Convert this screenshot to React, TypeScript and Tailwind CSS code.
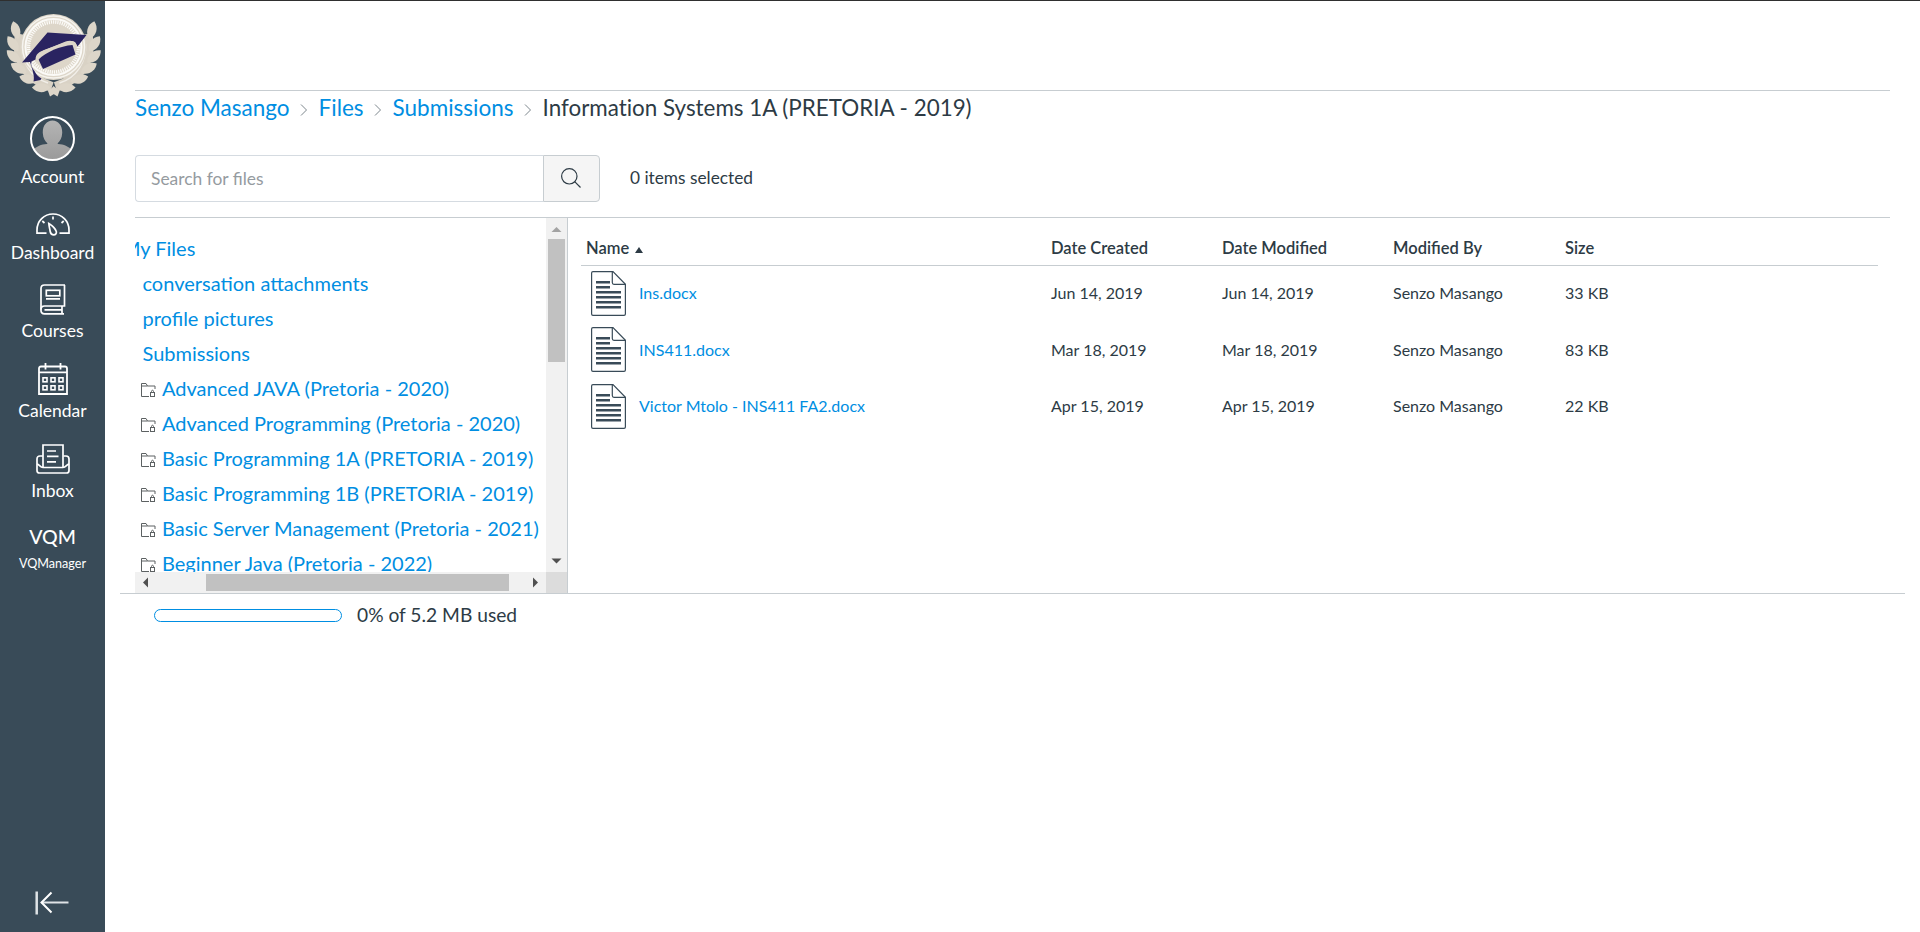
import React from "react";

type IconProps = { className?: string };

const LEAVES: [number, number, number][] = [
  [15, 29, -6],
  [12, 43, -26],
  [12.5, 56, -38],
  [17.5, 68, -50],
  [27, 79, -64],
  [40, 88, -80],
];

function CrestLogo() {
  return (
    <svg className="block h-[104px] w-[105px]" viewBox="0 1 105 104" fill="none">
      {[0, 1].map((side) => (
        <g key={side} transform={side ? "translate(107.5 0) scale(-1 1)" : undefined}>
          <path d="M20 34 C15 58 25 78 52 87" stroke="#d9d2c5" strokeWidth="10" />
          {LEAVES.map(([x, y, r]) => (
            <path
              key={y}
              transform={`translate(${x} ${y}) rotate(${r})`}
              d="M-1 -8 C6 -4 7 5 2 10 C-5 6 -6 -2 -1 -8 Z"
              fill="#ddd6c9"
            />
          ))}
          <path d="M54 86 L48 91 L50 96.500 L54 94 Z" fill="#ddd6c9" />
          <path d="M22 44 C21 62 31 78 48 83" stroke="#f1eee8" strokeWidth="1.500" />
        </g>
      ))}
      <circle cx="53.5" cy="47" r="33" fill="#ddd6c9" />
      <circle cx="53.5" cy="47" r="31" stroke="#f6f4ef" strokeWidth="1.5" />
      <circle cx="53.5" cy="47" r="28" stroke="#fbfaf7" strokeWidth="2" />
      <circle cx="53.5" cy="47" r="25" stroke="#fbfaf7" strokeWidth="3.5" strokeDasharray="1.2 1" />
      <path
        d="M22 62.5 L47.5 32.5 L86.5 35 L77.5 46.5 L75 42 C72 40.5 69 41 66 42 L44 50 C38 52.5 36 54 35.5 59.5 L31.5 61.5 C30.5 65 32 68 34.5 71 C36 74 38 77 41.5 78.5 L40.5 80 L33.5 81.5 C35 76 32 69 30 62 Z"
        fill="#2a2461"
      />
      <path d="M38.500 59.500 C46 52 60 46 72.500 45 L75.500 54.500 L43 69 Z" fill="#2a2461" />
      <path d="M37.500 61 C36.500 57 39 53.500 44 51.500 L66 42.500 C71 41 75 42 76 46.500" stroke="#ddd6c9" strokeWidth="2" />
    </svg>
  );
}

function Avatar() {
  return (
    <svg className="block h-[45px] w-[45px]" viewBox="0 0 45 45">
      <defs>
        <clipPath id="avatar-clip">
          <circle cx="22.5" cy="22.5" r="21" />
        </clipPath>
        <linearGradient id="avatar-fill" x1="0" y1="0" x2="0" y2="1">
          <stop offset="0" stopColor="#b4b4b4" />
          <stop offset="1" stopColor="#999999" />
        </linearGradient>
      </defs>
      <g clipPath="url(#avatar-clip)" fill="url(#avatar-fill)">
        <path d="M22.5 4.500 C28.500 4.500 32.500 10 32.200 17 C32 22 30 25 27.500 27.500 L28 28 C34 28.500 38 30 43 35 L43 46 L2 46 L2 35 C7 30 11 28.500 17 28 L17.500 27.500 C15 25 13 22 12.800 17 C12.500 10 16.500 4.500 22.500 4.500 Z" />
      </g>
      <circle cx="22.5" cy="22.5" r="21.5" fill="none" stroke="#fff" strokeWidth="2" />
    </svg>
  );
}

function DashboardIcon() {
  return (
    <svg className="block h-[23px] w-[34px]" viewBox="0 0 34 23" fill="none" stroke="#fff" strokeWidth="1.7">
      <path d="M10.500 20.200 H1 V17 C1 8 8 1 17 1 C26 1 33 8 33 17 V20.200 H23.500" />
      <path d="M17 3.500 V6.500 M6.300 8 L8.500 10 M27.700 8 L25.500 10" />
      <path d="M12.800 10.500 C16 12.500 19.500 16 20.300 18.500 C20.800 20.500 19.500 21.800 17.800 21.800 C15.500 21.800 14.500 20.500 14.200 18.500 C13.700 15.500 13 13 12.800 10.500 Z" />
    </svg>
  );
}

function CoursesIcon() {
  return (
    <svg className="block h-[31px] w-[26px]" viewBox="0 0 26 31" fill="none" stroke="#fff" strokeWidth="1.7">
      <path d="M25 1 H4.500 C2.300 1 1 2.300 1 4.500 V26.500 C1 28.500 2.300 29.800 4.500 29.800 H24" />
      <path d="M24.500 1 V22 H4.500 C2.300 22 1 23.300 1 25.500 M22 22 V29.800" />
      <rect x="6.300" y="6.300" width="13.500" height="5.500" />
      <path d="M6 14.800 H20 M4.500 25.800 H22" />
    </svg>
  );
}

function CalendarIcon() {
  return (
    <svg className="block h-[32px] w-[30px]" viewBox="0 0 30 32" fill="none" stroke="#fff" strokeWidth="1.8">
      <path d="M1 31 V5.500 C1 4.500 1.500 3.500 3 3.500 H27 C28.500 3.500 29 4.500 29 5.500 V31 Z M1 9.300 H29" />
      <path d="M7.500 0 V6.500 M22.500 0 V6.500" />
      {[14.8, 22.8].map((y) => (
        <g key={y} strokeWidth="1.6">
          <rect x="5" y={y} width="4" height="4" />
          <rect x="13" y={y} width="4" height="4" />
          <rect x="21" y={y} width="4" height="4" />
        </g>
      ))}
    </svg>
  );
}

function InboxIcon() {
  return (
    <svg className="block h-[30px] w-[34px]" viewBox="0 0 34 30" fill="none" stroke="#fff" strokeWidth="1.7">
      <path d="M7 12 H4 C2 12 1 13 1 15 V26.500 C1 28.300 2 29 3.500 29 H30.500 C32 29 33 28.300 33 26.500 V15 C33 13 32 12 30 12 H27.500" />
      <path d="M1 20 C3.500 20.500 4 23.500 7 23.500 H27 C30 23.500 30.500 20.500 33 20" />
      <path d="M7 23 V1 H27 V23 M11 7 H20 M11 12.300 H22.500 M11 17.800 H20" />
    </svg>
  );
}

function CollapseIcon() {
  return (
    <svg className="block h-[24px] w-[34px]" viewBox="0 0 34 24" fill="none" stroke="#fff">
      <path d="M1.700 0.500 V23.500" strokeWidth="2.500" stroke="#dfe3e6" />
      <path d="M6.500 11.500 H33.500" strokeWidth="2" stroke="#dfe3e6" />
      <path d="M16.500 1.500 L6.500 11.500 L16.500 21.500" strokeWidth="2" />
    </svg>
  );
}

function SearchIcon({ className }: IconProps) {
  return (
    <svg className={className} viewBox="0 0 20 20" fill="none" stroke="#2d3b45" strokeWidth="1.2">
      <circle cx="8.300" cy="8.300" r="7.700" />
      <path d="M13.700 13.700 L19.500 19.500" />
    </svg>
  );
}

function LockedFolderIcon() {
  return (
    <svg className="mt-[3px] block h-[14px] w-[15px] shrink-0" viewBox="0 0 15 14" fill="none" stroke="#5c6162">
      <path d="M8 13.500 H0.500 V0.500 H5 L6.500 3 H14 V6 M0.500 3 H6.500" />
      <rect x="9.500" y="9.500" width="4" height="4" />
      <path d="M10.500 9.500 V8.500 C10.500 6.800 12.500 6.800 12.500 8.500 V9.500" />
    </svg>
  );
}

function DocumentIcon() {
  return (
    <svg className="block h-[45px] w-[35px] shrink-0" viewBox="0 0 35 45" fill="none" stroke="#394b58" strokeWidth="1.200">
      <path d="M22 0.600 H2 C1.200 0.600 0.600 1.200 0.600 2 V43 C0.600 43.800 1.200 44.400 2 44.400 H33 C33.800 44.400 34.400 43.800 34.400 43 V13.300 Z" />
      <path d="M21.300 0.600 V11.500 C21.300 12.500 22 13.300 23 13.300 H34.400" />
      <path d="M5 11.250 H19 M5 16.250 H19 M5 21.250 H30 M5 26.250 H30 M5 31.250 H30 M5 36.250 H30" strokeWidth="2.500" />
    </svg>
  );
}

function Separator() {
  return (
    <svg className="mt-[3px] block h-[12px] w-[29px]" viewBox="0 0 29 12" fill="none" stroke="#7d868c">
      <path d="M11 0.500 L16.500 6 L11 11.500" />
    </svg>
  );
}

const NAV = [
  { label: "Account", icon: <Avatar />, box: "h-[83px] gap-[5px]" },
  { label: "Dashboard", icon: <DashboardIcon />, box: "h-[76px] gap-[6px]" },
  { label: "Courses", icon: <CoursesIcon />, box: "h-[78px] gap-[5px]" },
  { label: "Calendar", icon: <CalendarIcon />, box: "h-[80px] gap-[5px]" },
  { label: "Inbox", icon: <InboxIcon />, box: "h-[80px] gap-[6px]" },
];

const ROOT_FOLDERS = ["conversation attachments", "profile pictures", "Submissions"];

const COURSE_FOLDERS = [
  "Advanced JAVA (Pretoria - 2020)",
  "Advanced Programming (Pretoria - 2020)",
  "Basic Programming 1A (PRETORIA - 2019)",
  "Basic Programming 1B (PRETORIA - 2019)",
  "Basic Server Management (Pretoria - 2021)",
  "Beginner Java (Pretoria - 2022)",
];

const FILES = [
  { name: "Ins.docx", date: "Jun 14, 2019", size: "33 KB", height: "h-[55px]", shift: "pb-px" },
  { name: "INS411.docx", date: "Mar 18, 2019", size: "83 KB", height: "h-[57px]", shift: "" },
  { name: "Victor Mtolo - INS411 FA2.docx", date: "Apr 15, 2019", size: "22 KB", height: "h-[57px]", shift: "pb-px" },
];

const COLUMNS = "grid grid-cols-[470px_171px_171px_172px_1fr]";

function Sidebar() {
  return (
    <nav className="flex w-[105px] shrink-0 flex-col items-center bg-[#394b58] text-white">
      <CrestLogo />
      {NAV.map((item) => (
        <a key={item.label} className={`flex w-full flex-col items-center justify-end ${item.box}`}>
          {item.icon}
          <span className="text-[17.5px] leading-[22px]">{item.label}</span>
        </a>
      ))}
      <a className="flex h-[70px] w-full flex-col items-center justify-end gap-[7px]">
        <span className="text-[19.5px] leading-6 font-medium">VQM</span>
        <span className="text-[12.6px] leading-4">VQManager</span>
      </a>
      <div className="mt-auto mb-[17px] pr-px">
        <CollapseIcon />
      </div>
    </nav>
  );
}

function Breadcrumb() {
  return (
    <div className="flex h-16 items-start border-t border-[#c7cdd1] pt-px text-[22.5px] leading-8 text-[#008ee2] [font-variant-ligatures:none]">
      <div className="flex items-center">
        <a>Senzo Masango</a>
        <Separator />
        <a>Files</a>
        <Separator />
        <a>Submissions</a>
        <Separator />
        <span className="text-[22.4px] text-[#2d3b45]">Information Systems 1A (PRETORIA - 2019)</span>
      </div>
    </div>
  );
}

function Toolbar() {
  return (
    <div className="flex items-center pt-px pb-[15px] text-[17.4px]">
      <div className="flex h-[47px] w-[408px] items-center rounded-l-[4px] border border-r-0 border-[#d5dbe1] pt-0.5 pl-[15px] text-[#959ba0]">
        Search for files
      </div>
      <button className="flex h-[47px] w-[57px] items-center justify-center rounded-r-[4px] border border-[#c7cdd1] bg-[#f5f5f5] pr-px pb-px">
        <SearchIcon className="block h-5 w-5" />
      </button>
      <span className="pb-0.5 pl-[30px] text-[17.3px]">0 items selected</span>
    </div>
  );
}

function FolderTree() {
  return (
    <div className="grid h-[375px] w-[433px] shrink-0 grid-cols-[411px_21px] grid-rows-[354px_21px] border-r border-[#c7cdd1]">
      <div className="overflow-hidden pt-[13px] text-[20px] leading-[35px] whitespace-nowrap text-[#008ee2]">
        <div className="-ml-[13px]">My Files</div>
        {ROOT_FOLDERS.map((name) => (
          <div key={name} className="pl-[7.5px]">{name}</div>
        ))}
        {COURSE_FOLDERS.map((name) => (
          <div key={name} className="flex items-center gap-[6px] pl-[6px]">
            <LockedFolderIcon />
            <span>{name}</span>
          </div>
        ))}
      </div>
      <div className="flex flex-col items-center bg-[#f1f1f1]">
        <svg className="block h-[21px] w-[21px] shrink-0" viewBox="0 0 21 21">
          <path d="M10.500 9 L15.500 14 H5.500 Z" fill="#a3a3a3" />
        </svg>
        <div className="h-[123px] w-[17px] bg-[#c1c1c1]" />
        <svg className="mt-auto block h-[21px] w-[21px] shrink-0" viewBox="0 0 21 21">
          <path d="M10.500 12.500 L15.500 7.500 H5.500 Z" fill="#505050" />
        </svg>
      </div>
      <div className="flex items-center bg-[#f1f1f1]">
        <svg className="block h-[21px] w-[21px]" viewBox="0 0 21 21">
          <path d="M8 10.500 L13 5.500 V15.500 Z" fill="#505050" />
        </svg>
        <div className="ml-[50px] h-[17px] w-[303px] bg-[#c1c1c1]" />
        <svg className="ml-auto block h-[21px] w-[21px]" viewBox="0 0 21 21">
          <path d="M13 10.500 L8 5.500 V15.500 Z" fill="#505050" />
        </svg>
      </div>
      <div className="bg-[#dcdcdc]" />
    </div>
  );
}

function FileTable() {
  return (
    <div className="mr-3 ml-[13px] flex-1">
      <div className={`${COLUMNS} h-12 items-end border-b border-[#c7cdd1] pb-[5px] text-[16.5px] leading-6 font-semibold`}>
        <span className="flex items-center gap-[6px] pl-[5px]">
          Name
          <svg className="mt-[3px] block h-[6px] w-[8px]" viewBox="0 0 8 6">
            <path d="M4 0 L8 6 H0 Z" fill="#2d3b45" />
          </svg>
        </span>
        <span>Date Created</span>
        <span>Date Modified</span>
        <span>Modified By</span>
        <span>Size</span>
      </div>
      {FILES.map((file) => (
        <div key={file.name} className={`${COLUMNS} ${file.height} ${file.shift} items-center text-[16px] leading-6`}>
          <span className="flex items-center gap-[13px] pl-[10px] text-[#008ee2]">
            <DocumentIcon />
            {file.name}
          </span>
          <span>{file.date}</span>
          <span>{file.date}</span>
          <span>Senzo Masango</span>
          <span>{file.size}</span>
        </div>
      ))}
    </div>
  );
}

export default function App() {
  return (
    <div className="flex h-[932px] w-[1920px] flex-col overflow-hidden border-t border-[#2f2f2f] bg-white font-['Lato',sans-serif] text-[#2d3b45]">
      <div className="flex flex-1">
        <Sidebar />
        <main className="flex flex-1 flex-col pr-[15px] pl-[15px]">
          <div className="px-[15px] pt-[89px]">
            <Breadcrumb />
            <Toolbar />
            <div className="flex border-t border-[#c7cdd1]">
              <FolderTree />
              <FileTable />
            </div>
          </div>
          <div className="flex items-start border-t border-[#c7cdd1] pt-[9px] pl-[34px]">
            <div className="mt-[6px] h-[13px] w-[188px] rounded-full border border-[#008ee2]" />
            <span className="pl-[15px] text-[19.2px] leading-6">0% of 5.2 MB used</span>
          </div>
        </main>
      </div>
    </div>
  );
}
